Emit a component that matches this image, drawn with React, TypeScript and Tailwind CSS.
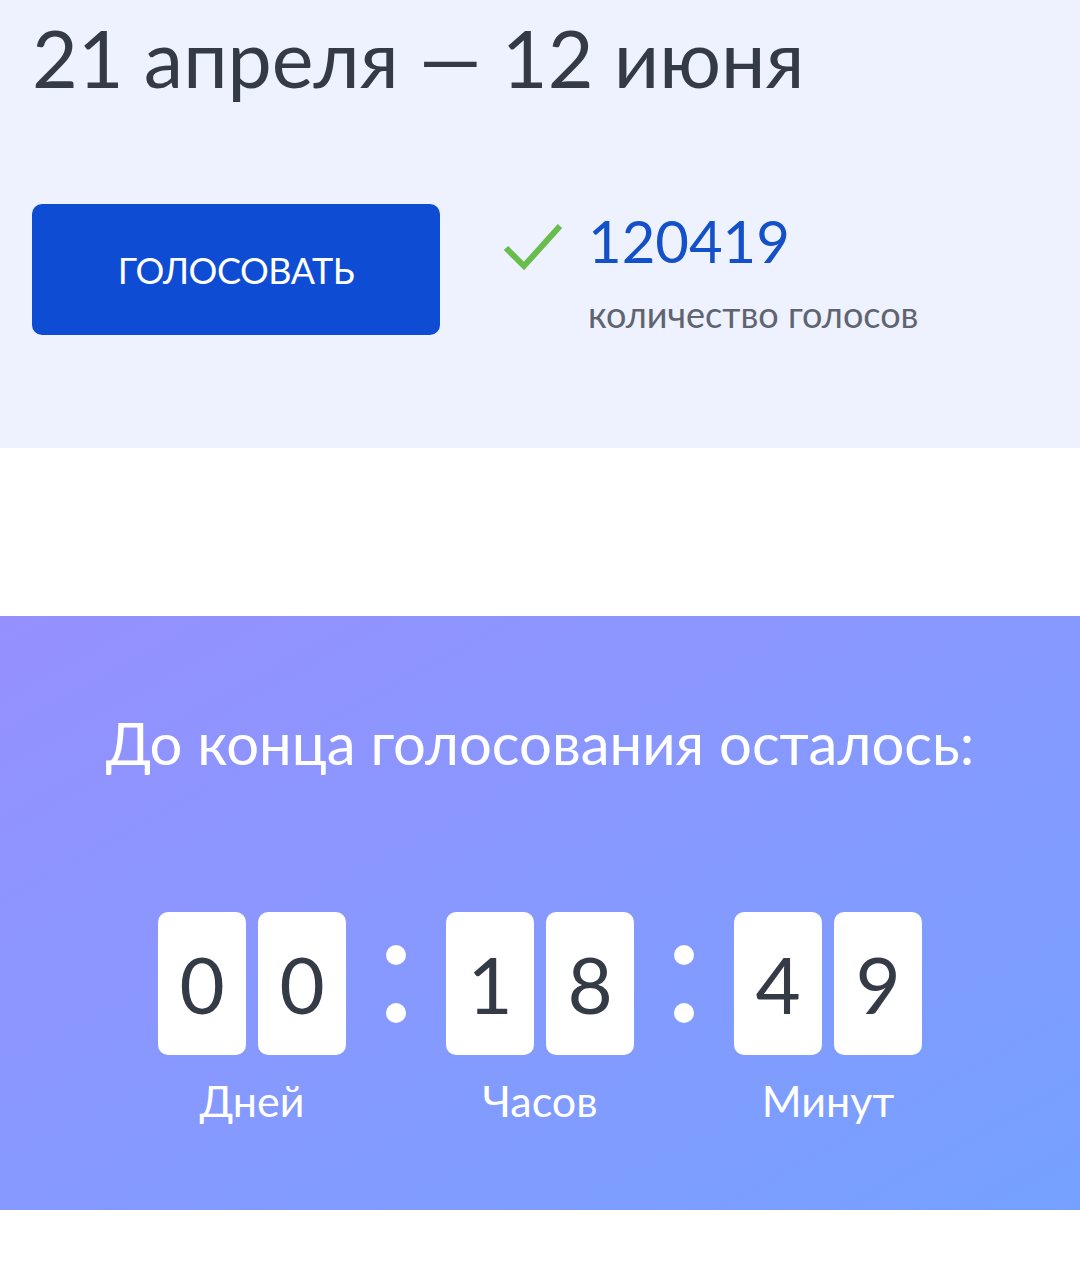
const font = { fontFamily: 'Lato, "Noto Sans", "Open Sans", sans-serif' }

function Digit({ value }: { value: string }) {
  return (
    <div className="flex h-[143px] w-[88px] items-center justify-center rounded-[10px] bg-white text-[78px] leading-none text-[#343b46]">
      {value}
    </div>
  )
}

function Group({ digits, label }: { digits: string; label: string }) {
  return (
    <div className="flex w-[186px] flex-col items-center">
      <div className="flex gap-[12px]">
        {digits.split('').map((d, i) => (
          <Digit key={i} value={d} />
        ))}
      </div>
      <div className="mt-[24px] text-[43px] leading-none text-white">{label}</div>
    </div>
  )
}

function Colon() {
  return (
    <div className="flex h-[143px] w-[102px] flex-col items-center justify-center gap-[38px]">
      <span className="h-[20px] w-[20px] rounded-full bg-white" />
      <span className="h-[20px] w-[20px] rounded-full bg-white" />
    </div>
  )
}

export default function App() {
  return (
    <div className="min-h-[1278px] w-[1080px] bg-white" style={font}>
      {/* Header */}
      <div className="h-[448px] bg-[#edf2fe] px-[32px] pt-[10px]">
        <h1 className="text-[79px] leading-[96px] text-[#343b46]">21 апреля — 12 июня</h1>
        <div className="mt-[98px] flex items-start">
          <button className="flex h-[131px] w-[408px] items-center justify-center rounded-[10px] bg-[#0d4cd3] text-[36px] tracking-[-0.5px] text-white">
            ГОЛОСОВАТЬ
          </button>
          <div className="ml-[62px] mt-[8px] flex items-start">
            <svg width="62" height="52" viewBox="0 0 62 52" className="mt-[8px]">
              <path d="M4 28 L22 46 L58 6" fill="none" stroke="#68bd4c" strokeWidth="6" />
            </svg>
            <div className="ml-[24px]">
              <div className="text-[58px] leading-none text-[#1450c8]">120419</div>
              <div className="mt-[26px] text-[36px] leading-none text-[#5f6470]">количество голосов</div>
            </div>
          </div>
        </div>
      </div>

      {/* Countdown */}
      <div className="mt-[168px] h-[594px] bg-gradient-to-br from-[#9590fe] to-[#75a1fe] pt-[98px]">
        <div className="text-center text-[58px] leading-none text-white">До конца голосования осталось:</div>
        <div className="mt-[140px] flex justify-center">
          <Group digits="00" label="Дней" />
          <Colon />
          <Group digits="18" label="Часов" />
          <Colon />
          <Group digits="49" label="Минут" />
        </div>
      </div>
    </div>
  )
}
